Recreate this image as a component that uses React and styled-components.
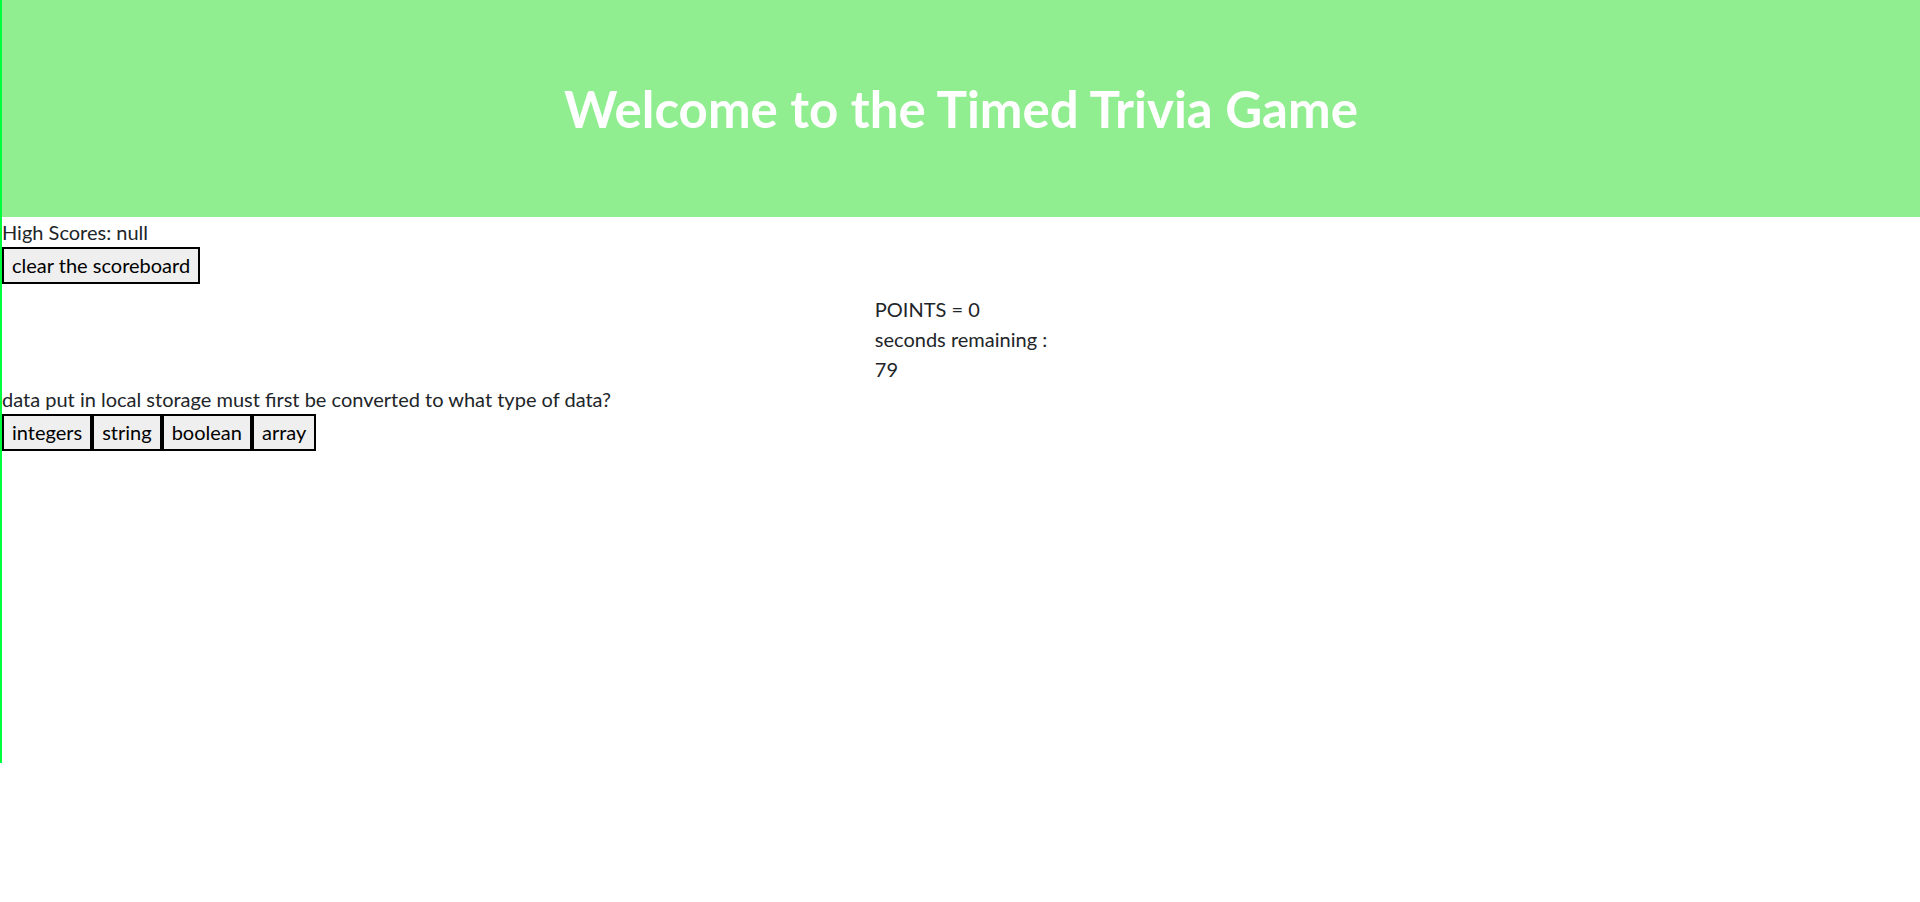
import React from "react";
import styled, { createGlobalStyle } from "styled-components";

const GlobalStyle = createGlobalStyle`
  body {
    margin: 0;
    font-family: "Segoe UI", Lato, "Open Sans", sans-serif;
    font-size: 20px;
    line-height: 1.5;
    color: #212529;
    background: #fff;
  }
`;

const Page = styled.div`
  height: 763px;
  border-left: 2px solid #00ff3c;
`;

const Header = styled.header`
  height: 217px;
  background-color: #90ee90;
  display: flex;
  align-items: center;
  justify-content: center;
`;

const Title = styled.h1`
  margin: 0;
  color: #fff;
  font-size: 51px;
  font-weight: 700;
  line-height: 1.2;
`;

const Line = styled.div`
  line-height: 30px;
`;

const Button = styled.button`
  font-family: inherit;
  font-size: 20px;
  line-height: 33px;
  color: #000;
  background-color: #efefef;
  border: 2px solid #000;
  padding: 0 8px;
  margin: 0;
  cursor: pointer;
`;

const Timer = styled.div`
  display: flex;
  justify-content: center;
  margin-top: 10px;
`;

const TimerBox = styled.div`
  display: flex;
  flex-direction: column;
  line-height: 30px;
`;

const Choices = styled.div`
  display: flex;
`;

export default function App() {
  const answers = ["integers", "string", "boolean", "array"];
  return (
    <>
      <GlobalStyle />
      <Page>
        <Header>
          <Title>Welcome to the Timed Trivia Game</Title>
        </Header>
        <Line>High Scores: null</Line>
        <Button>clear the scoreboard</Button>
        <Timer>
          <TimerBox>
            <span>POINTS = 0</span>
            <span>seconds remaining :</span>
            <span>79</span>
          </TimerBox>
        </Timer>
        <Line>data put in local storage must first be converted to what type of data?</Line>
        <Choices>
          {answers.map((a) => (
            <Button key={a}>{a}</Button>
          ))}
        </Choices>
      </Page>
    </>
  );
}
